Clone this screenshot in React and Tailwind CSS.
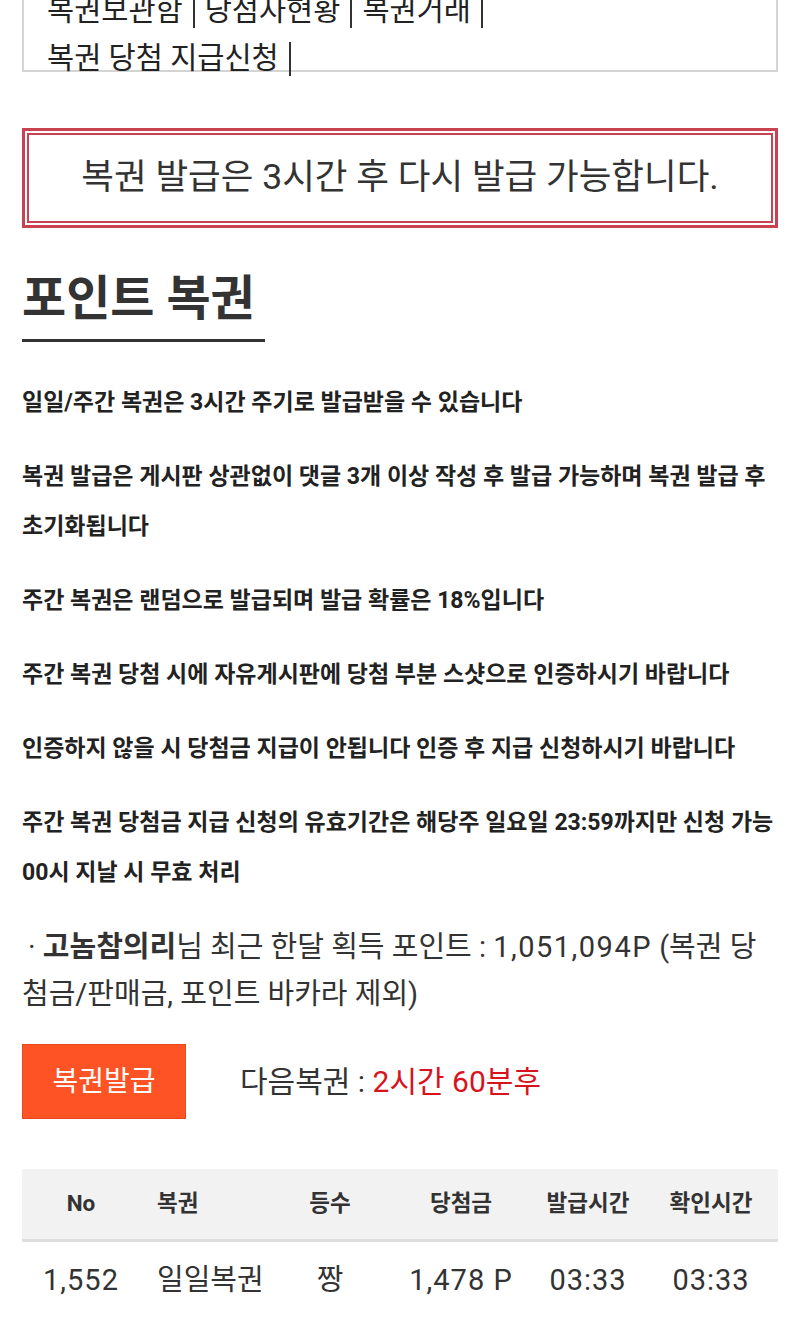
import React from 'react';

const FONT = { fontFamily: 'Roboto, "Noto Sans CJK KR", sans-serif' };

const rules = [
  ['일일/주간 복권은 3시간 주기로 발급받을 수 있습니다'],
  ['복권 발급은 게시판 상관없이 댓글 3개 이상 작성 후 발급 가능하며 복권 발급 후', '초기화됩니다'],
  ['주간 복권은 랜덤으로 발급되며 발급 확률은 18%입니다'],
  ['주간 복권 당첨 시에 자유게시판에 당첨 부분 스샷으로 인증하시기 바랍니다'],
  ['인증하지 않을 시 당첨금 지급이 안됩니다 인증 후 지급 신청하시기 바랍니다'],
  ['주간 복권 당첨금 지급 신청의 유효기간은 해당주 일요일 23:59까지만 신청 가능', '00시 지날 시 무효 처리'],
];

const cols = [
  { label: 'No', w: 'w-[118px]', align: 'justify-center' },
  { label: '복권', w: 'w-[130px]', align: 'justify-start pl-[17px]' },
  { label: '등수', w: 'w-[120px]', align: 'justify-center' },
  { label: '당첨금', w: 'w-[142px]', align: 'justify-center' },
  { label: '발급시간', w: 'w-[112px]', align: 'justify-center' },
  { label: '확인시간', w: 'w-[134px]', align: 'justify-center' },
];

const row = ['1,552', '일일복권', '짱', '1,478 P', '03:33', '03:33'];

function Bar() {
  return <span className="inline-block mx-[10px] w-[2px] h-[34px] align-[-8px] bg-[#333]" />;
}

export default function App() {
  return (
    <div className="w-[800px] h-[1319px] overflow-hidden bg-white text-[#333]" style={FONT}>
      <div className="px-[22px]">
        {/* board nav box */}
        <div className="mt-[-30px] h-[102px] border-2 border-[#d4d4d4] pl-[23px] pt-[14px] text-[29.5px] leading-[48px] text-[#222]">
          <div>
            복권보관함<Bar />당점자현황<Bar />복권거래<Bar />
          </div>
          <div>
            복권 당첨 지급신청<Bar />
          </div>
        </div>

        {/* notice */}
        <div className="mt-[56px] border-[3px] border-[#c8424f] p-[2px]">
          <div className="h-[90px] border-2 border-[#c8424f] flex items-center justify-center text-[35.5px] text-[#333]">
            복권 발급은 3시간 후 다시 발급 가능합니다.
          </div>
        </div>

        {/* title */}
        <h1 className="mt-[41px] w-[243px] border-b-[3px] border-[#333] pb-[10px] text-[48px] leading-[60px] font-bold text-[#333]">
          포인트 복권
        </h1>

        {/* rules */}
        <div className="mt-[36px] flex flex-col gap-[24px] text-[23px] leading-[50px] font-bold text-[#222]">
          {rules.map((lines, i) => (
            <p key={i} className="whitespace-nowrap">
              {lines.map((l, j) => (
                <span key={j} className="block">{l}</span>
              ))}
            </p>
          ))}
        </div>

        {/* points */}
        <p className="mt-[26px] pl-[6px] text-[29px] leading-[47px] text-[#333]">
          · <b className="font-bold">고놈참의리</b>님 최근 한달 획득 포인트 : <span className="tracking-[1.5px]">1,051,094P</span> (복권 당
          <br />
          <span className="-ml-[6px]">첨금/판매금, 포인트 바카라 제외)</span>
        </p>

        {/* issue */}
        <div className="mt-[26px] flex items-center">
          <button className="w-[164px] h-[75px] bg-[#fe5324] border border-[#e4481d] text-white text-[28px]">
            복권발급
          </button>
          <div className="ml-[54px] text-[30px]">
            <span className="text-[#333]">다음복권 : </span>
            <span className="text-[#d7141d]">2시간 60분후</span>
          </div>
        </div>

        {/* table */}
        <div className="mt-[50px]">
          <div className="flex h-[73px] bg-[#f2f2f2] border-b-[3px] border-[#dedede] text-[22.5px] font-bold text-[#333]">
            {cols.map((c) => (
              <div key={c.label} className={`${c.w} flex items-center ${c.align}`}>
                {c.label}
              </div>
            ))}
          </div>
          <div className="flex h-[78px] text-[29px] text-[#333]">
            {row.map((v, i) => (
              <div key={i} className={`${cols[i].w} flex items-center ${cols[i].align} ${i === 1 || i === 2 ? '' : 'tracking-[1px]'}`}>
                {v}
              </div>
            ))}
          </div>
        </div>
      </div>
    </div>
  );
}
